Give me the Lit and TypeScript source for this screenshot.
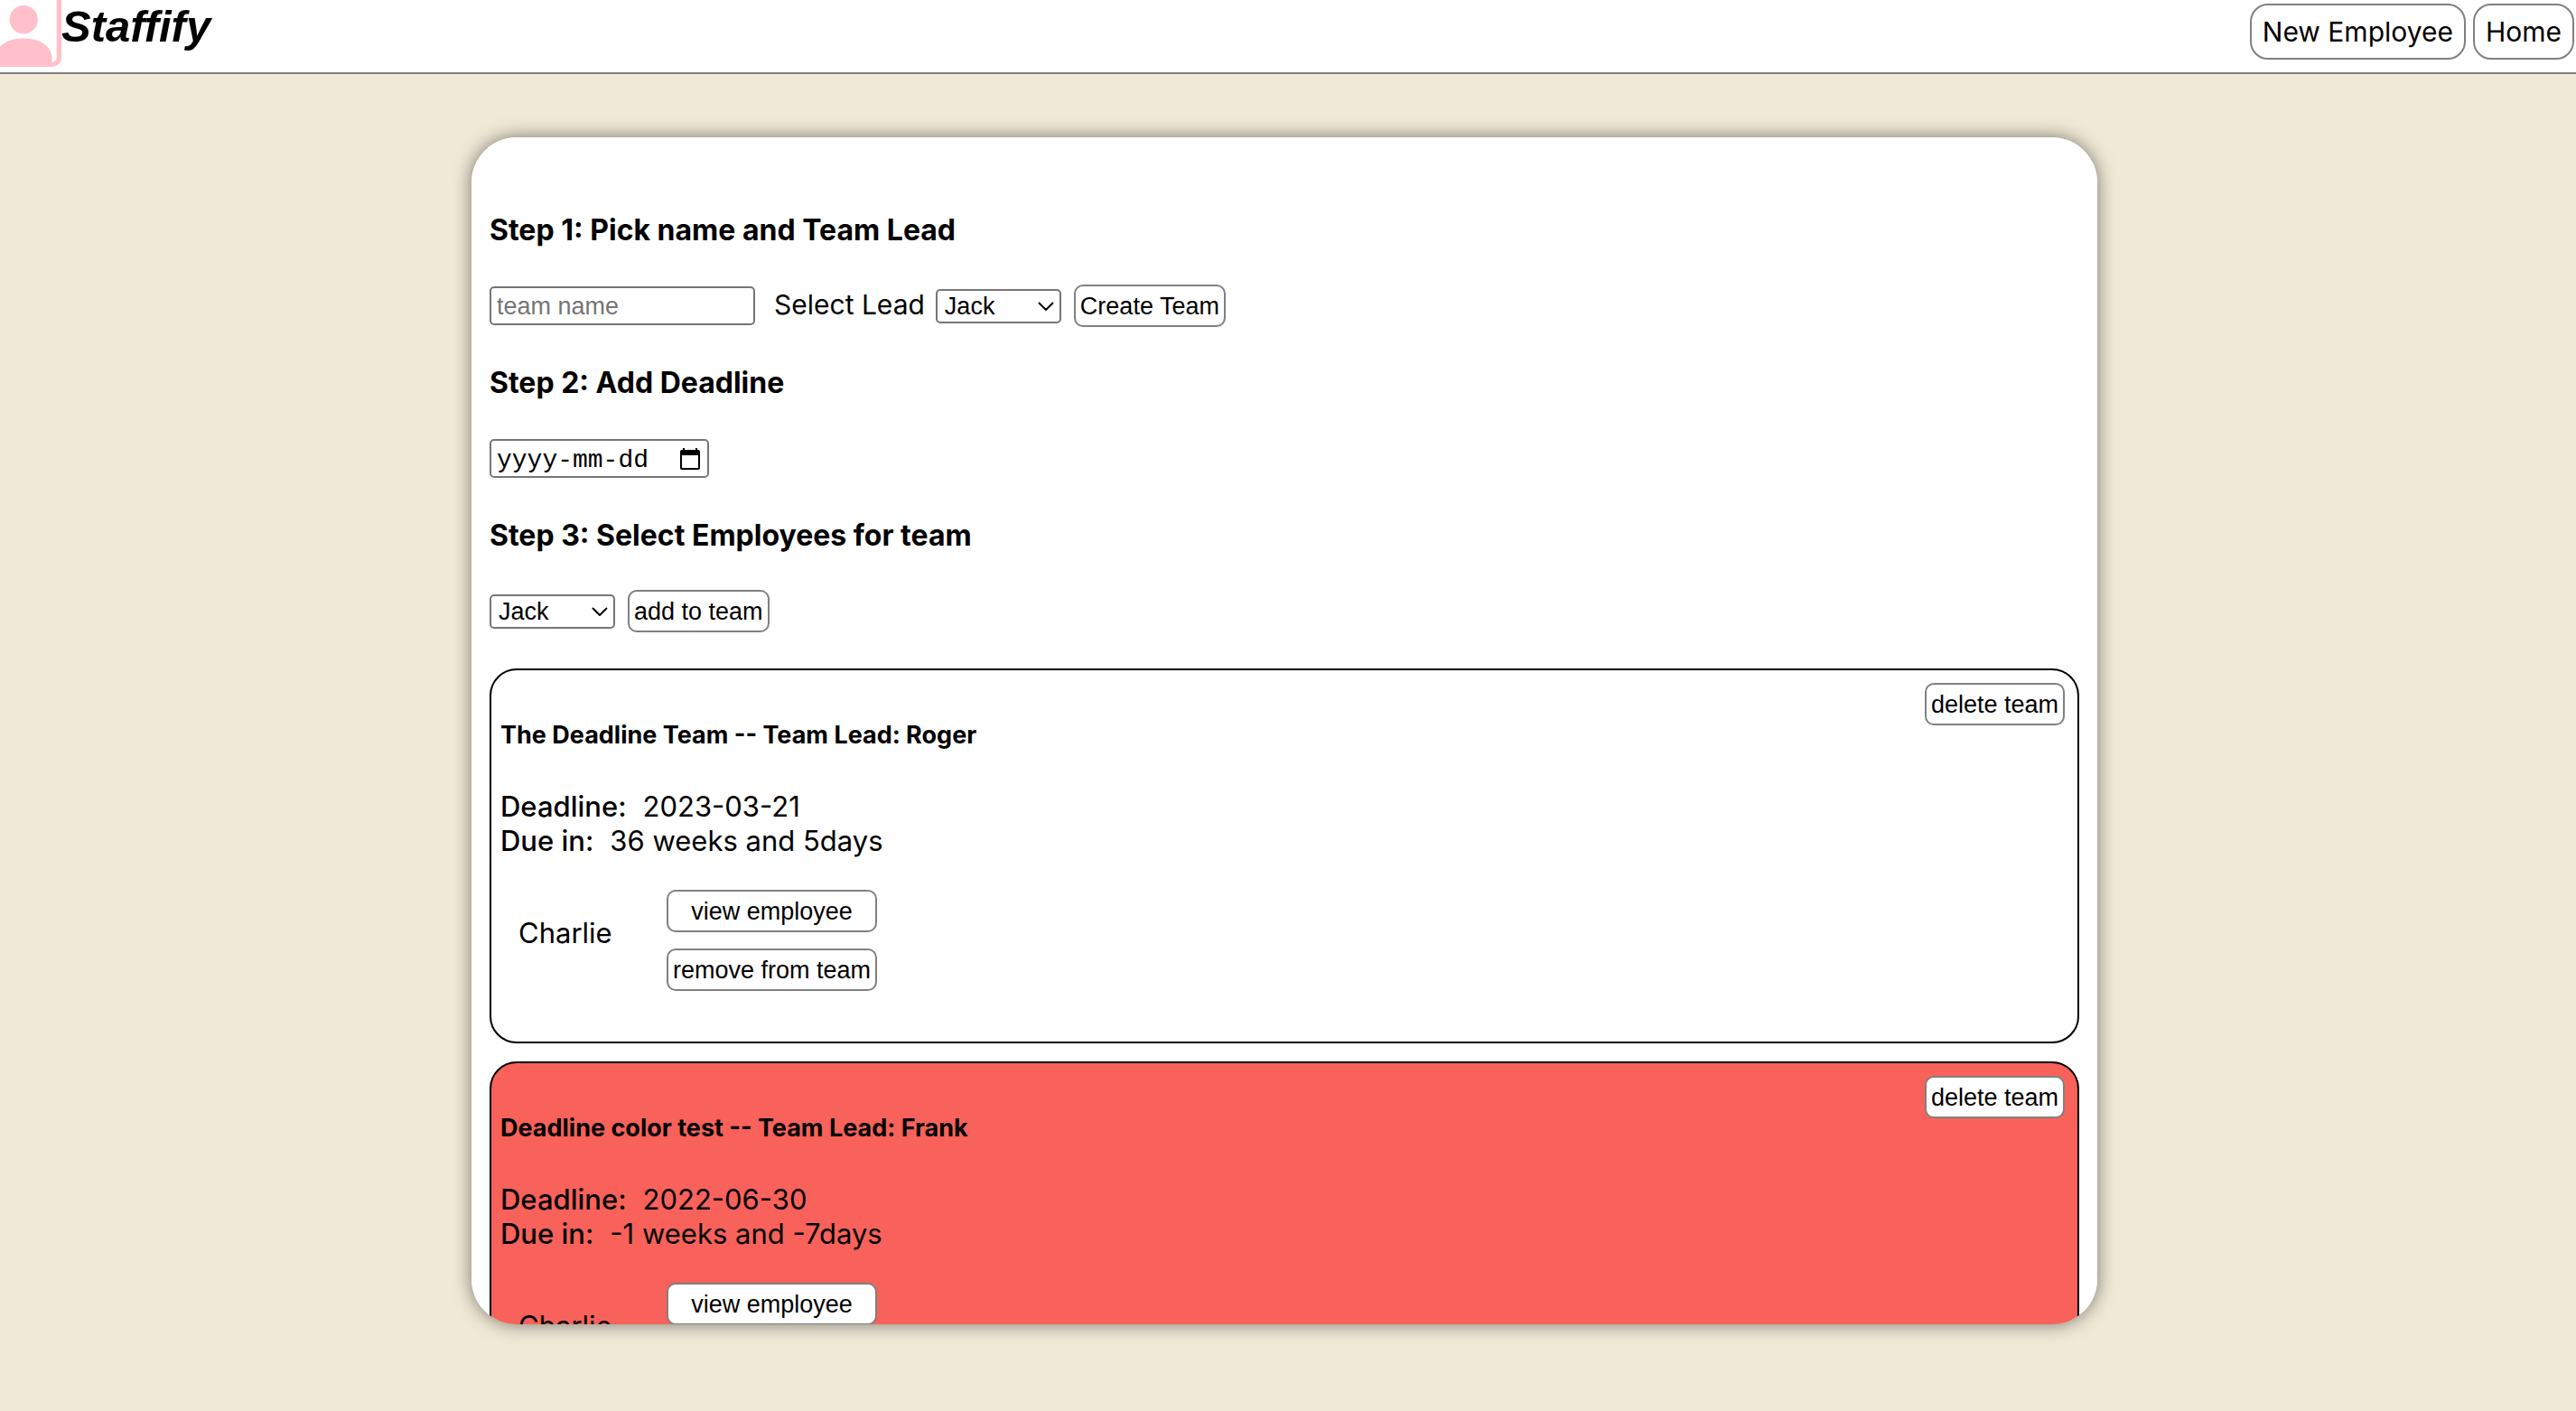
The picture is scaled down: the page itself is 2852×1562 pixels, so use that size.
import { LitElement, html, css } from "lit";
import { customElement, property } from "lit/decorators.js";
import { classMap } from "lit/directives/class-map.js";

interface Team {
  name: string;
  lead: string;
  deadline: string;
  weeks: number;
  days: number;
  overdue: boolean;
  members: string[];
}

const EMPLOYEES = ["Jack", "Roger", "Frank", "Charlie"];

const TEAMS: Team[] = [
  { name: "The Deadline Team", lead: "Roger", deadline: "2023-03-21", weeks: 36, days: 5, overdue: false, members: ["Charlie"] },
  { name: "Deadline color test", lead: "Frank", deadline: "2022-06-30", weeks: -1, days: -7, overdue: true, members: ["Charlie"] },
];

const controls = css`
  * {
    box-sizing: border-box;
  }
  .button {
    height: 47px;
    margin: 0;
    padding: 0 5px;
    border: 2px solid gray;
    border-radius: 10px;
    background: white;
    color: black;
    font: 27px/32px "Liberation Sans", Arial, sans-serif;
    white-space: nowrap;
    cursor: pointer;
  }
`;

@customElement("employee-select")
class EmployeeSelect extends LitElement {
  @property() label = "";
  @property({ type: Boolean }) captioned = false;

  static styles = [
    controls,
    css`
      :host {
        display: flex;
        align-items: center;
        gap: 12px;
      }
      .caption {
        padding-bottom: 4px;
        font-size: 30px;
        line-height: 38px;
      }
      .box {
        display: grid;
        align-items: center;
        width: 139px;
      }
      .select,
      .chevron {
        grid-area: 1 / 1;
      }
      .select {
        appearance: none;
        width: 100%;
        height: 38px;
        margin: 0;
        padding: 0 32px 0 8px;
        border: 2px solid #767676;
        border-radius: 5px;
        background: white;
        color: black;
        font: 27px/32px "Liberation Sans", Arial, sans-serif;
      }
      .chevron {
        justify-self: end;
        width: 18px;
        height: 10px;
        margin-right: 8px;
        pointer-events: none;
      }
    `,
  ];

  render() {
    return html`
      ${this.captioned ? html`<label class="caption" for="employee">${this.label}</label>` : null}
      <div class="box">
        <select class="select" id="employee" aria-label=${this.label}>
          ${EMPLOYEES.map((e) => html`<option>${e}</option>`)}
        </select>
        <svg class="chevron" viewBox="0 0 18 10" aria-hidden="true">
          <path d="M1 1l8 8 8-8" fill="none" stroke="black" stroke-width="2" />
        </svg>
      </div>
    `;
  }
}

@customElement("team-card")
class TeamCard extends LitElement {
  @property({ attribute: false }) team!: Team;

  static styles = [
    controls,
    css`
      :host {
        display: block;
      }
      .team {
        padding: 0 14px 56px 10px;
        border: 2px solid black;
        border-radius: 30px;
        background: white;
      }
      .overdue {
        background: #f8625a;
      }
      .top {
        display: flex;
        justify-content: space-between;
        align-items: flex-start;
        padding-top: 14px;
      }
      .title {
        margin: 42px 0 44px;
        font-size: 27px;
        line-height: 32px;
        font-weight: 700;
      }
      .facts {
        margin: 0 0 35px;
        line-height: 38px;
      }
      .fact {
        display: flex;
        gap: 18px;
      }
      .term {
        font-weight: 500;
      }
      .value {
        margin: 0;
      }
      .members {
        margin: 0;
        padding: 0 0 0 20px;
        list-style: none;
      }
      .member {
        display: flex;
        align-items: center;
      }
      .name {
        width: 164px;
        padding-bottom: 16px;
        line-height: 38px;
      }
      .actions {
        display: grid;
        gap: 18px;
      }
    `,
  ];

  render() {
    const t = this.team;
    return html`
      <article class=${classMap({ team: true, overdue: t.overdue })}>
        <div class="top">
          <h5 class="title">${t.name} -- Team Lead: ${t.lead}</h5>
          <button class="button">delete team</button>
        </div>
        <dl class="facts">
          <div class="fact"><dt class="term">Deadline:</dt><dd class="value">${t.deadline}</dd></div>
          <div class="fact"><dt class="term">Due in:</dt><dd class="value">${t.weeks} weeks and ${t.days}days</dd></div>
        </dl>
        <ul class="members">
          ${t.members.map(
            (m) => html`<li class="member">
              <span class="name">${m}</span>
              <div class="actions">
                <button class="button">view employee</button>
                <button class="button">remove from team</button>
              </div>
            </li>`
          )}
        </ul>
      </article>
    `;
  }
}

@customElement("app-root")
class AppRoot extends LitElement {
  static styles = [
    controls,
    css`
      :host {
        display: flex;
        flex-direction: column;
        height: 100vh;
        background: #f0e9d6;
        color: black;
        font-family: Inter, "Liberation Sans", sans-serif;
        font-size: 31px;
      }
      .bar {
        display: flex;
        justify-content: space-between;
        align-items: flex-start;
        border-bottom: 2px solid gray;
        background: white;
      }
      .brand {
        display: flex;
        align-items: flex-start;
        height: 80px;
      }
      .logo {
        width: 68px;
        height: 74px;
      }
      .wordmark {
        margin: 0;
        font-family: "Liberation Sans", Arial, sans-serif;
        font-size: 49px;
        line-height: 58px;
        font-style: italic;
        font-weight: 700;
      }
      .nav {
        display: flex;
        gap: 8px;
        padding: 4px 2px 0 0;
        font-size: 30px;
      }
      .link {
        padding: 10px 12px;
        border: 2px solid gray;
        border-radius: 20px;
        color: black;
        line-height: 38px;
        text-decoration: none;
      }
      .page {
        flex: 1;
        display: flex;
        justify-content: center;
        min-height: 0;
        padding: 70px 8px 96px 0;
      }
      .panel {
        width: 100%;
        max-width: 1800px;
        padding: 84px 20px 20px;
        border-radius: 50px;
        background: white;
        box-shadow: 0 0 20px rgba(0, 0, 0, 0.5);
        overflow-y: auto;
        scrollbar-width: none;
      }
      .steps {
        display: grid;
        gap: 43px;
        margin-bottom: 40px;
      }
      .heading {
        margin: 0 0 41px;
        font-size: 32px;
        line-height: 38px;
        font-weight: 700;
      }
      .row {
        display: flex;
        align-items: center;
        height: 47px;
        gap: 14px;
      }
      .text {
        height: 43px;
        padding: 2px 6px 0;
        border: 2px solid #767676;
        border-radius: 5px;
        background: white;
        color: black;
        font: 27px/32px "Liberation Sans", Arial, sans-serif;
      }
      .team-name {
        width: 294px;
        margin-right: 7px;
      }
      .text::placeholder {
        color: #757575;
        opacity: 1;
      }
      .date {
        display: grid;
        align-items: center;
        width: 243px;
      }
      .date-text,
      .picker {
        grid-area: 1 / 1;
      }
      .date-text {
        width: 100%;
        padding: 4px 40px 0 6px;
        font: 28px/32px "Liberation Mono", "Courier New", monospace;
      }
      .date-text::placeholder {
        color: black;
      }
      .picker {
        display: flex;
        justify-self: end;
        margin-right: 10px;
        padding: 0;
        border: 0;
        background: none;
      }
      .calendar {
        width: 22px;
        height: 24px;
      }
      .teams {
        display: grid;
        gap: 20px;
      }
    `,
  ];

  render() {
    return html`
      <header class="bar">
        <div class="brand">
          <svg class="logo" viewBox="3 2 13 14" preserveAspectRatio="xMaxYMax meet" fill="pink" aria-hidden="true">
            <path d="M11 6a3 3 0 1 1-6 0 3 3 0 0 1 6 0z" />
            <path d="M2 0a2 2 0 0 0-2 2v12a2 2 0 0 0 2 2h12a2 2 0 0 0 2-2V2a2 2 0 0 0-2-2H2zm12 1a1 1 0 0 1 1 1v12a1 1 0 0 1-1 1v-1c0-1-1-4-6-4s-6 3-6 4v1a1 1 0 0 1-1-1V2a1 1 0 0 1 1-1h12z" />
          </svg>
          <h1 class="wordmark">Staffify</h1>
        </div>
        <nav class="nav">
          <a class="link" href="#new">New Employee</a>
          <a class="link" href="#home">Home</a>
        </nav>
      </header>
      <main class="page">
        <div class="panel">
          <div class="steps">
            <section>
              <h4 class="heading">Step 1: Pick name and Team Lead</h4>
              <div class="row">
                <input class="text team-name" type="text" placeholder="team name" aria-label="team name" />
                <employee-select label="Select Lead" captioned></employee-select>
                <button class="button">Create Team</button>
              </div>
            </section>
            <section>
              <h4 class="heading">Step 2: Add Deadline</h4>
              <div class="row">
                <div class="date">
                  <input class="text date-text" type="text" placeholder="yyyy-mm-dd" aria-label="Deadline" />
                  <button class="picker" aria-label="Open calendar">
                    <svg class="calendar" viewBox="0 0 22 24" aria-hidden="true">
                      <path fill-rule="evenodd" d="M3 0h2v2h12V0h2v2h1a2 2 0 0 1 2 2v18a2 2 0 0 1-2 2H2a2 2 0 0 1-2-2V4a2 2 0 0 1 2-2h1zM2 8v14h18V8z" />
                    </svg>
                  </button>
                </div>
              </div>
            </section>
            <section>
              <h4 class="heading">Step 3: Select Employees for team</h4>
              <div class="row">
                <employee-select label="Employee"></employee-select>
                <button class="button">add to team</button>
              </div>
            </section>
          </div>
          <div class="teams">${TEAMS.map((t) => html`<team-card .team=${t}></team-card>`)}</div>
        </div>
      </main>
    `;
  }
}
